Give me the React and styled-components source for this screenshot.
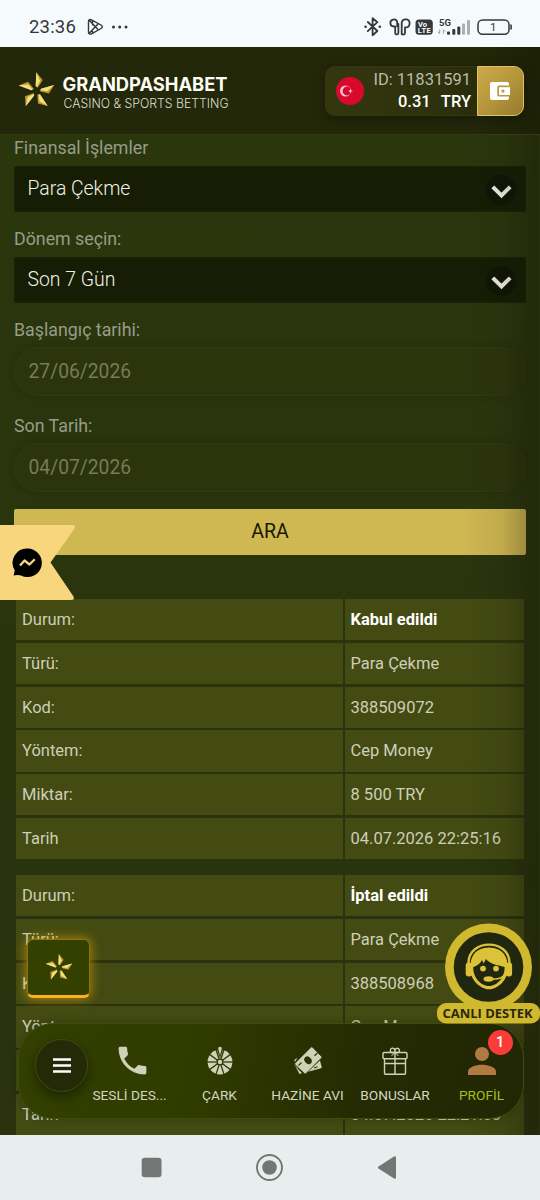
import React from "react";
import styled, { createGlobalStyle } from "styled-components";
import { MdPhone } from "react-icons/md";

const GlobalStyle = createGlobalStyle`
  * {
    box-sizing: border-box;
  }
  body {
    margin: 0;
    font-family: Roboto, "Liberation Sans", sans-serif;
    background: #2b340c;
  }
`;

const Screen = styled.div`
  position: relative;
  display: flex;
  flex-direction: column;
  width: 540px;
  height: 1200px;
  overflow: hidden;
`;

const StatusBar = styled.div`
  display: flex;
  align-items: center;
  flex: none;
  height: 47px;
  padding: 7px 26px 0 29px;
  background: #f5fbfd;
  color: #34383c;
  .time {
    width: 58px;
    font-size: 18.5px;
    letter-spacing: 0.2px;
  }
  .status-icons {
    margin-left: auto;
  }
  svg {
    display: block;
  }
`;

const Header = styled.header`
  display: flex;
  align-items: center;
  justify-content: space-between;
  flex: none;
  height: 88px;
  padding: 0 16.5px 0 17px;
  background: linear-gradient(90deg, #23280a 88%, #1c2006);
  border-bottom: 1px solid #333b0f;
  z-index: 2;
  .logo {
    display: block;
    overflow: visible;
  }
`;

const Account = styled.div`
  display: flex;
  width: 199px;
  height: 50px;
  align-items: center;
  border: 1px solid #34370f;
  border-right: 0;
  border-radius: 10px;
  background: linear-gradient(90deg, #34370e, #2c300c 60%, #23280a);
  box-shadow: 0 3px 12px rgba(0, 0, 0, 0.35);
  .flag {
    margin-left: 10px;
  }
`;

const Balance = styled.div`
  flex: 1;
  padding-right: 6px;
  text-align: right;
  line-height: 22px;
  .id {
    color: #b9bba9;
    font-size: 16.5px;
  }
  .amount {
    color: #fff;
    font-size: 16.5px;
    font-weight: 500;
    word-spacing: 6.5px;
  }
`;

const WalletButton = styled.div`
  display: flex;
  width: 46.5px;
  height: 50px;
  align-items: center;
  justify-content: center;
  border: 1px solid #e0c25f;
  border-radius: 0 10px 10px 0;
  background: linear-gradient(135deg, #cbab4b, #b39439 55%, #94782f);
`;

const Main = styled.main`
  position: relative;
  flex: 1;
  min-height: 0;
  margin-top: -1px;
  padding: 0 14px;
  overflow: hidden;
  background: linear-gradient(180deg, #2b360d, #29330d 75%, #2b320d);
`;

const EdgeShade = styled.div`
  position: absolute;
  top: 0;
  right: 0;
  bottom: 0;
  width: 76px;
  pointer-events: none;
  background: linear-gradient(
    90deg,
    rgba(20, 18, 8, 0),
    rgba(20, 18, 8, 0.08) 50%,
    rgba(20, 18, 8, 0.34) 96%,
    rgba(20, 18, 8, 0.12)
  );
`;

const Field = styled.div`
  margin-bottom: ${(props) => (props.$date ? "15.5px" : "13.5px")};
  label {
    display: block;
    height: ${(props) => (props.$date ? "31px" : "31.5px")};
    color: #989c88;
    font-size: 17.8px;
    line-height: 27px;
  }
`;

const Select = styled.div`
  display: flex;
  height: 46px;
  align-items: center;
  justify-content: space-between;
  padding: 0 9px 0 12.5px;
  border: 1px solid #1c2206;
  border-radius: 2px;
  background: #161d04;
  color: #f0f2e6;
  font-size: 19.4px;
  font-weight: 300;
  line-height: 44px;
  svg {
    display: block;
    margin-top: 3px;
  }
`;

const DateInput = styled.div`
  height: 49px;
  padding-left: 13.5px;
  border: 1px solid #323a11;
  border-radius: 24px;
  background: #2c340c;
  box-shadow: 0 0 7px rgba(20, 24, 5, 0.25);
  color: #777b5b;
  font-size: 19.3px;
  line-height: 47px;
`;

const SearchButton = styled.div`
  height: 46.5px;
  margin-top: 17px;
  border-radius: 2px;
  background: #cfb751;
  color: #171704;
  font-size: 19.5px;
  line-height: 46px;
  text-align: center;
`;

const Table = styled.div`
  display: grid;
  grid-template-columns: 326.5px 1fr;
  grid-auto-rows: 41.25px;
  gap: 2.5px;
  margin: ${(props) => (props.$first ? "44px" : "16px")} 2px 0;
`;

const Cell = styled.div`
  padding-left: ${(props) => (props.$value ? "5.5px" : "6px")};
  background: #434b12;
  color: ${(props) => (props.$strong ? "#fff" : "#cdcfb8")};
  font-size: 16.5px;
  font-weight: ${(props) => (props.$strong ? 700 : 400)};
  line-height: 41px;
  white-space: nowrap;
`;

const Ribbon = styled.svg`
  position: absolute;
  left: 0;
  top: 525px;
  z-index: 3;
`;

const StarTile = styled.div`
  position: absolute;
  left: 27px;
  top: 939px;
  z-index: 3;
  display: flex;
  width: 63px;
  height: 59px;
  align-items: center;
  justify-content: center;
  border: 1px solid #8a7411;
  border-bottom: 3px solid #fdb21a;
  border-radius: 6px;
  background: #344000;
  box-shadow: 0 0 11px 1px rgba(224, 158, 10, 0.65);
`;

const Support = styled.svg`
  position: absolute;
  left: 435px;
  top: 922px;
  z-index: 5;
`;

const BottomNav = styled.nav`
  position: absolute;
  left: 17.5px;
  top: 1022.5px;
  z-index: 4;
  display: flex;
  width: 506px;
  height: 96px;
  padding: 15px 0 0 16.5px;
  border: 1.5px solid #3f4c0b;
  border-radius: 35px;
  background: linear-gradient(100deg, #334000 0%, #303b00 35%, #252b02 68%, #212605 100%);
  box-shadow: 0 0 8px rgba(20, 24, 0, 0.3);
`;

const MenuButton = styled.div`
  display: flex;
  flex: none;
  width: 53px;
  height: 53px;
  align-items: center;
  justify-content: center;
  margin-right: -1.5px;
  border: 1.5px solid #404b10;
  border-radius: 50%;
  background: #242a08;
  box-shadow: 0 5px 12px rgba(10, 12, 0, 0.5);
`;

const NavItem = styled.div`
  position: relative;
  display: flex;
  flex: none;
  flex-direction: column;
  align-items: center;
  width: ${(props) => props.$width || 88}px;
  height: 74px;
  padding-top: 7px;
  color: #cfd2b9;
  svg {
    display: block;
    flex: none;
  }
  .phone {
    margin: -3.5px -5px -3.5px 0;
  }
  span {
    margin-top: 9px;
    color: ${(props) => (props.$active ? "#a5bf18" : "#d3d6c0")};
    font-size: 13.7px;
    line-height: 20px;
    white-space: nowrap;
  }
`;

const Badge = styled.div`
  position: absolute;
  top: -9px;
  right: 9px;
  width: 25px;
  height: 25px;
  border-radius: 50%;
  background: #fb3b37;
  color: #fff;
  font-size: 14.5px;
  font-weight: 500;
  line-height: 25px;
  text-align: center;
`;

const SystemNav = styled.div`
  flex: none;
  height: 65px;
  background: #e8edee;
  svg {
    display: block;
  }
`;

function Blades() {
  return (
    <>
      {[0, 72, 144, 216, 288].map((angle) => (
        <g key={angle} transform={`rotate(${angle})`}>
          <path d="M-.2-18.7 6.2-11 1.2-3.2-.8-5Z" fill="#bd9733" />
          <path d="M-.2-18.7 3.6-10 .4-4-.8-5Z" fill="#f4df79" />
        </g>
      ))}
    </>
  );
}

function Logo() {
  return (
    <svg className="logo" width="216" height="46" viewBox="17 68 216 46">
      <g transform="translate(36.5 91)">
        <Blades />
      </g>
      <text x="62.5" y="91" textLength="165" lengthAdjust="spacingAndGlyphs" fontFamily="Inter, sans-serif" fontWeight="700" fontSize="18.3" fill="#fdfdf4">
        GRANDPASHABET
      </text>
      <text x="63.5" y="108" textLength="165" lengthAdjust="spacingAndGlyphs" fontFamily="Inter, sans-serif" fontWeight="300" fontSize="13" fill="#dcdfcc">
        CASINO &amp; SPORTS BETTING
      </text>
    </svg>
  );
}

function StatusIcons() {
  return (
    <svg className="status-icons" width="152" height="24" viewBox="361 15 152 24">
      <g fill="none" stroke="#34383c" strokeWidth="1.8" strokeLinejoin="round" strokeLinecap="round">
        <path d="m366.8 22 9.6 9-4.8 4.2V18.2l4.8 4-9.6 9" />
        <path d="M396.2 26.3V22a3.5 3.5 0 1 0-3.2 4.5h1.2v6.2c0 2.5 3.2 2.2 3.2 0V24M400.7 34.3V22.5a4 4 0 1 1 3.9 4.9h-.6v5.4c0 2.5-3.3 2.3-3.3 0" />
        <rect x="477" y="19.9" width="31" height="14.4" rx="4.5" strokeWidth="1.5" />
      </g>
      <circle cx="364.6" cy="26.7" r="1.3" fill="#34383c" />
      <circle cx="378.8" cy="26.7" r="1.3" fill="#34383c" />
      <path d="M509.3 24.2q1.6 0 1.6 1.4v2.8q0 1.4-1.6 1.4Z" fill="#34383c" />
      <rect x="414.5" y="19.5" width="17.3" height="15.2" rx="3.5" fill="#34383c" />
      <g fontFamily="Roboto, sans-serif" fontWeight="700">
        <text x="417" y="26.5" fontSize="7.5" fill="#fff">Vo</text>
        <text x="416.8" y="33.3" fontSize="7.5" fill="#fff" textLength="13">LTE</text>
        <text x="438" y="25.5" fontSize="9.5" fill="#34383c">5G</text>
      </g>
      <text x="489" y="31.2" fontSize="11.5" fill="#34383c" fontFamily="Roboto, sans-serif">1</text>
      <g fill="#34383c">
        <rect x="446" y="31.5" width="3" height="3.2" rx="1" />
        <rect x="451.3" y="29" width="3" height="5.7" rx="1" />
        <rect x="456.3" y="26.5" width="3" height="8.2" rx="1" />
      </g>
      <g fill="#aaafb1">
        <rect x="461" y="23.5" width="3" height="11.2" rx="1" />
        <rect x="466" y="20" width="3" height="14.7" rx="1" />
      </g>
      <path d="M438.7 29.5v4m-2-1.8 2 2M442.3 34v-4.3l2 2" fill="none" stroke="#9a9fa2" strokeWidth="1" />
    </svg>
  );
}

function Chevron() {
  return (
    <svg width="30" height="30" viewBox="0 0 30 30">
      <circle cx="15" cy="15" r="15" fill="#101505" />
      <path d="m6.8 11.8 8.7 8.7 8.7-8.7" fill="none" stroke="#eceee6" strokeWidth="4" />
    </svg>
  );
}

function WheelIcon() {
  return (
    <svg width="30" height="30" viewBox="-15 -15 30 30">
      <circle cx="0" cy="1" r="12.4" fill="#cfd2b9" />
      {[18, 54, 90, 126, 162, 198, 234, 270, 306, 342].map((angle) => (
        <path
          key={angle}
          transform={`translate(0 1) rotate(${angle})`}
          d="M0-3.5V-13"
          stroke="#303a00"
          strokeWidth="1.3"
        />
      ))}
      <circle cx="0" cy="1" r="3.7" fill="#303a00" />
      <circle cx="0" cy="1" r="2.2" fill="#cfd2b9" />
      <path d="M-3.3-12h6.6L0-2.5Z" fill="#303a00" />
      <path d="M0-14.2a1.8 1.8 0 0 1 1.8 2L0-5.5l-1.8-6.7a1.8 1.8 0 0 1 1.8-2Z" fill="#cfd2b9" />
    </svg>
  );
}

function MoneyIcon() {
  return (
    <svg width="28" height="30" viewBox="0 0 28 30">
      <path d="m.5 13.5 3-1.500L.8 16Zm0 5 5 9.500 2.500-1-3.500-3.500ZM14 25.800l13-3.500q1-.3.700-1.300L26 14.500 14.500 25Z" fill="#cfd2b9" />
      <path d="M17 1.200q.8-.7 1.500 0l9 9.300q.7.800 0 1.500L12 27.500q-.8.700-1.500 0L1 18.700q-.8-.8 0-1.500Z" fill="#cfd2b9" stroke="#2b3400" strokeWidth=".7" />
      <ellipse cx="14" cy="14.3" rx="3.3" ry="4.2" transform="rotate(-42 14 14.3)" fill="#2b3400" />
      <path d="m4.500 19.500 3-3M20.500 9.800l3-2.800M20 22l3.500-1.200" stroke="#2b3400" strokeWidth="1.2" />
    </svg>
  );
}

function GiftIcon() {
  return (
    <svg width="26" height="30" viewBox="0 0 26 30" fill="none" stroke="#cfd2b9" strokeWidth="1.4">
      <rect x="1" y="6.5" width="24" height="6.3" rx="1.2" />
      <path d="M2.500 12.800V27A1.200 1.200 0 0 0 3.700 28.300h18.600a1.200 1.200 0 0 0 1.200-1.300V12.800M13 4v24M2.500 17.500h21" />
      <path d="M12.800 6.500H9.500a2.300 2.300 0 1 1 3.400-2 2.300 2.300 0 1 1 3.500 2h-3.300" />
      <path d="m12.600 6.500-3 3.500m3.800-3.500 3 3.500" strokeWidth="1" />
    </svg>
  );
}

function ProfileIcon() {
  return (
    <svg width="28" height="30" viewBox="0 0 28 30" fill="#b27a43">
      <circle cx="14" cy="8" r="7" />
      <path d="M0 29v-3.500C0 21 8 18.700 14 18.700S28 21 28 25.500V29Z" />
    </svg>
  );
}

function SupportBadge() {
  return (
    <Support width="105" height="103" viewBox="435 922 105 103">
      <circle cx="488.5" cy="967" r="43.5" fill="#d0b82f" />
      <circle cx="488.5" cy="967" r="34.8" fill="#21260f" />
      <rect x="437" y="1003" width="103" height="20.5" rx="9" fill="#d0b82f" />
      <path d="M470.500 965c0-24 37-24 37 0v5c0 10-10 19.300-18.500 19.300S470.500 980 470.500 970Z" fill="#dcc238" />
      <path d="M473.300 967c3.500-1 7-3.500 8.700-7l1.500 3.500 2.500-4.500c4 5 11 6 18.500 8 .8 9-6.500 19-15.500 19s-16.400-10-15.700-19Z" fill="#21260f" />
      <path d="M469.500 963c0-22 39-22 39 0" fill="none" stroke="#21260f" strokeWidth="1.8" />
      <path d="M468.500 963c0-24.500 41-24.500 41 0" fill="none" stroke="#dcc238" strokeWidth="2.4" />
      <rect x="465.7" y="962.5" width="6.6" height="14" rx="3" fill="#dcc238" />
      <rect x="505.5" y="962.5" width="6.6" height="14" rx="3" fill="#dcc238" />
      <circle cx="483" cy="968.6" r="2.9" fill="#dcc238" />
      <circle cx="496" cy="968.6" r="2.9" fill="#dcc238" />
      <path d="M505 974c-2.500 4-5.500 5-12 5.200" fill="none" stroke="#dcc238" strokeWidth="1.6" />
      <ellipse cx="488.5" cy="979" rx="5" ry="2.7" fill="#dcc238" />
      <text x="442.5" y="1017.8" textLength="90" lengthAdjust="spacingAndGlyphs" fontFamily="Open Sans, sans-serif" fontSize="12" fontWeight="700" fill="#29270c">
        CANLI DESTEK
      </text>
    </Support>
  );
}

const accepted = [
  ["Durum:", "Kabul edildi"],
  ["Türü:", "Para Çekme"],
  ["Kod:", "388509072"],
  ["Yöntem:", "Cep Money"],
  ["Miktar:", "8 500 TRY"],
  ["Tarih", "04.07.2026 22:25:16"],
];

const cancelled = [
  ["Durum:", "İptal edildi"],
  ["Türü:", "Para Çekme"],
  ["Kod:", "388508968"],
  ["Yöntem:", "Cep Money"],
  ["Miktar:", "8 500 TRY"],
  ["Tarih", "04.07.2026 22:21:03"],
];

function Transaction({ rows, first }) {
  return (
    <Table $first={first}>
      {rows.map(([name, value], i) => (
        <React.Fragment key={name}>
          <Cell>{name}</Cell>
          <Cell $value $strong={i === 0}>
            {value}
          </Cell>
        </React.Fragment>
      ))}
    </Table>
  );
}

function App() {
  return (
    <>
      <GlobalStyle />
      <Screen>
        <StatusBar>
          <div className="time">23:36</div>
          <svg width="44" height="20" viewBox="87 17 44 20" fill="none" stroke="#34383c" strokeLinejoin="round">
            <path d="M88.500 21.500c0-2 1.500-2.500 3-1.700l9.500 5.200c1.800 1 1.800 2.500 0 3.500l-9.500 5.300c-1.500.8-3 .2-3-1.600ZM89 20l9 9.500M89 33.500l9-9.500M92.500 20.500v4l3 2.300-3 2.700v4" strokeWidth="1.4" />
            <g fill="#34383c" stroke="none">
              <circle cx="113.5" cy="27" r="1.5" />
              <circle cx="119.7" cy="27" r="1.5" />
              <circle cx="126" cy="27" r="1.5" />
            </g>
          </svg>
          <StatusIcons />
        </StatusBar>

        <Header>
          <Logo />
          <Account>
            <svg className="flag" width="28" height="28" viewBox="0 0 28 28">
              <circle cx="14" cy="14" r="14" fill="#d8092c" />
              <circle cx="9.5" cy="14" r="5.5" fill="#f6c3cb" />
              <circle cx="11" cy="14" r="4.4" fill="#d8092c" />
              <path d="m14.500 11.600-.7 1.700-1.800.7 1.800.7.700 1.700.6-1.700 1.800-.7-1.800-.7Z" fill="#f6c3cb" />
            </svg>
            <Balance>
              <div className="id">ID: 11831591</div>
              <div className="amount">0.31 TRY</div>
            </Balance>
            <WalletButton>
              <svg width="20" height="20" viewBox="0 0 20 20">
                <path d="M2 1h15a2 2 0 0 1 2 2v14a2 2 0 0 1-2 2H2a2 2 0 0 1-2-2V3a2 2 0 0 1 2-2Z" fill="#fff" />
                <rect x="7.3" y="4.6" width="13" height="11" rx="1.5" fill="#b79a40" />
                <rect x="9" y="6.2" width="11" height="7.8" fill="#fff" />
                <circle cx="13" cy="10.1" r="1.6" fill="#b79a40" />
              </svg>
            </WalletButton>
          </Account>
        </Header>

        <Main>
          <Field>
            <label>Finansal İşlemler</label>
            <Select>
              Para Çekme
              <Chevron />
            </Select>
          </Field>
          <Field>
            <label>Dönem seçin:</label>
            <Select>
              Son 7 Gün
              <Chevron />
            </Select>
          </Field>
          <Field $date>
            <label>Başlangıç tarihi:</label>
            <DateInput>27/06/2026</DateInput>
          </Field>
          <Field $date>
            <label>Son Tarih:</label>
            <DateInput>04/07/2026</DateInput>
          </Field>
          <SearchButton>ARA</SearchButton>
          <Transaction rows={accepted} first />
          <Transaction rows={cancelled} />
          <EdgeShade />
        </Main>

        <Ribbon width="78" height="76" viewBox="0 0 78 76">
          <path d="M0 0h72q4.500 0 2.500 3.800L50.500 37.500l23 34Q75 75 71 75H0Z" fill="#f7d67e" />
          <path d="M27.500 23.500a14.300 14.300 0 1 1-6.500 27q-2.500-1-5.500-.3l-1.800.2 1-5.200A14.300 14.300 0 0 1 27.500 23.500Z" fill="#000" />
          <path d="m20 40.500 4.500-5 5 4 5.200-5.200" fill="none" stroke="#f7d67e" strokeWidth="2.3" strokeLinejoin="round" />
        </Ribbon>

        <StarTile>
          <svg width="30" height="30" viewBox="-20 -20 40 40">
            <Blades />
          </svg>
        </StarTile>

        <BottomNav>
          <MenuButton>
            <svg width="18" height="15" viewBox="0 0 18 15">
              <path d="M0 1.500h18M0 7.500h18M0 13.500h18" stroke="#fff" strokeWidth="2.3" />
            </svg>
          </MenuButton>
          <NavItem $width={86}>
            <MdPhone className="phone" size={37} />
            <span>SESLİ DES...</span>
          </NavItem>
          <NavItem $width={94}>
            <WheelIcon />
            <span>ÇARK</span>
          </NavItem>
          <NavItem $width={82}>
            <MoneyIcon />
            <span>HAZİNE AVI</span>
          </NavItem>
          <NavItem $width={93}>
            <GiftIcon />
            <span>BONUSLAR</span>
          </NavItem>
          <NavItem $active $width={80}>
            <ProfileIcon />
            <span>PROFİL</span>
            <Badge>1</Badge>
          </NavItem>
        </BottomNav>
        <SupportBadge />

        <SystemNav>
          <svg width="540" height="65" viewBox="0 0 540 65" fill="#727675">
            <rect x="141.7" y="22.7" width="19.8" height="19.6" rx="3" />
            <circle cx="269.5" cy="32.5" r="7.3" />
            <circle cx="269.5" cy="32.5" r="12.5" fill="none" stroke="#727675" strokeWidth="1.9" />
            <path d="M378.500 31.500 394 21.500q2-1 2 1v20q0 2-2 1l-15.500-10q-1.300-1 0-2Z" />
          </svg>
        </SystemNav>
      </Screen>
    </>
  );
}

export default App;
